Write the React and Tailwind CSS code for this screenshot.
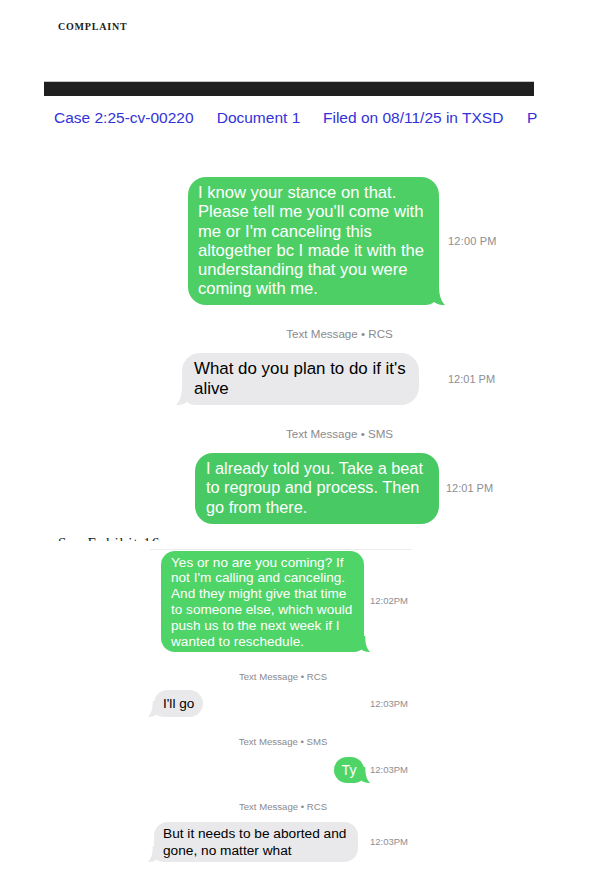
const SANS = { fontFamily: '"Liberation Sans", Arial, sans-serif' };
const SERIF = { fontFamily: '"Liberation Serif", "Times New Roman", serif' };

function Tail({ side, color, w = 24, h = 20 }) {
  // iMessage-style curl in the bottom corner of a bubble
  const pos = side === 'right' ? 'right-[-6px]' : 'left-[-6px] -scale-x-100';
  return (
    <svg width={w} height={h} viewBox="0 0 24 20" className={`absolute bottom-0 ${pos}`}>
      <path d="M0 0 H18 C18 8 19 15 24 20 C19.5 20.3 15.5 19 13 17 C11 19 8 20 4 20 H0 Z" fill={color} />
    </svg>
  );
}

function Lines({ lines }) {
  return lines.map((l, i) => (
    <span key={i} className="relative block whitespace-nowrap">{l}</span>
  ));
}

export default function App() {
  return (
    <div className="relative w-[607px] h-[869px] overflow-hidden bg-white" style={SANS}>
      {/* page header */}
      <div className="pt-[21px] pl-[58px] text-[10px] leading-[12px] font-semibold tracking-[0.8px] text-[#222]" style={SERIF}>
        COMPLAINT
      </div>
      <div className="mt-[48px] ml-[44px] w-[490px] h-[15px] bg-[#1f1f1f] border-t border-[#c4c4c4]" />
      <div className="mt-[13px] ml-[54px] flex text-[15.5px] leading-[18px] text-[#3232d8] whitespace-nowrap">
        <span className="w-[162.7px]">Case 2:25-cv-00220</span>
        <span className="w-[106.3px]">Document 1</span>
        <span className="w-[204px]">Filed on 08/11/25 in TXSD</span>
        <span>P</span>
      </div>

      {/* first screenshot */}
      <div className="mt-[50px] ml-[182px] w-[315px]">
        <div className="flex items-center">
          <div className="w-[257px] flex justify-end">
            <div className="relative w-[251px] rounded-[18px] bg-[#4dcf66] pl-[10px] pt-[6px] pb-[6px] text-[16.6px] leading-[19.3px] text-white">
              <Tail side="right" color="#4dcf66" />
              <Lines lines={[
                'I know your stance on that.',
                "Please tell me you'll come with",
                "me or I'm canceling this",
                'altogether bc I made it with the',
                'understanding that you were',
                'coming with me.',
              ]} />
            </div>
          </div>
          <span className="ml-[9px] text-[11px] text-[#8e8e93] tracking-[0.2px]">12:00 PM</span>
        </div>

        <div className="mt-[23px] text-center text-[11.6px] leading-[12px] text-[#8a8a8e]">Text Message • RCS</div>

        <div className="mt-[13px] flex items-center">
          <div className="w-[257px] flex justify-start">
            <div className="relative w-[237px] rounded-[18px] bg-[#e9e9eb] pl-[12px] py-[6px] text-[16.9px] leading-[20px] text-black">
              <Tail side="left" color="#e9e9eb" />
              <Lines lines={["What do you plan to do if it's", 'alive']} />
            </div>
          </div>
          <span className="ml-[9px] text-[11px] text-[#8e8e93]">12:01 PM</span>
        </div>

        <div className="mt-[23px] text-center text-[11.6px] leading-[12px] text-[#8a8a8e]">Text Message • SMS</div>

        <div className="mt-[13px] flex items-center">
          <div className="w-[257px] flex justify-end">
            <div className="w-[244px] rounded-[18px] bg-[#48c964] pl-[11px] py-[6px] text-[16.3px] leading-[19.6px] text-white">
              <Lines lines={[
                'I already told you. Take a beat',
                'to regroup and process. Then',
                'go from there.',
              ]} />
            </div>
          </div>
          <span className="ml-[7px] text-[11px] text-[#8e8e93]">12:01 PM</span>
        </div>
      </div>

      {/* caption cut off by the next screenshot */}
      <div className="mt-[12px] ml-[58px] h-[5px] overflow-hidden text-[15px] leading-[15px] tracking-[1px] text-[#222]" style={SERIF}>
        See Exhibit 16
      </div>

      {/* second screenshot */}
      <div className="mt-[8px] ml-[150px] w-[262px] border-t border-[#ededed] pl-[4px]">
        <div className="mt-[1px] flex items-center">
          <div className="w-[210px] flex justify-end">
            <div className="relative w-[203px] rounded-[14px] bg-[#4fd468] pl-[10px] pt-[4px] pb-[3px] text-[13.6px] leading-[15.8px] text-white">
              <Tail side="right" color="#4fd468" w={19} h={16} />
              <Lines lines={[
                'Yes or no are you coming? If',
                "not I'm calling and canceling.",
                'And they might give that time',
                'to someone else, which would',
                'push us to the next week if I',
                'wanted to reschedule.',
              ]} />
            </div>
          </div>
          <span className="ml-[6px] text-[9.5px] text-[#8e8e93]">12:02PM</span>
        </div>

        <div className="mt-[18.5px] text-center text-[9.6px] leading-[11px] text-[#8a8a8e]">Text Message • RCS</div>

        <div className="mt-[8.5px] flex items-center">
          <div className="w-[210px] flex justify-start">
            <div className="relative rounded-[14px] bg-[#e9e9eb] px-[9px] py-[5.5px] text-[13.6px] leading-[16px] text-black">
              <Tail side="left" color="#e9e9eb" w={19} h={16} />
              <Lines lines={["I'll go"]} />
            </div>
          </div>
          <span className="ml-[6px] text-[9.5px] text-[#8e8e93]">12:03PM</span>
        </div>

        <div className="mt-[18.5px] text-center text-[9.6px] leading-[11px] text-[#8a8a8e]">Text Message • SMS</div>

        <div className="mt-[10.5px] flex items-center">
          <div className="w-[210px] flex justify-end">
            <div className="relative w-[30px] rounded-[14px] bg-[#4fd468] py-[5px] text-center text-[14px] leading-[16px] text-white">
              <Tail side="right" color="#4fd468" w={19} h={16} />
              <Lines lines={['Ty']} />
            </div>
          </div>
          <span className="ml-[6px] text-[9.5px] text-[#8e8e93]">12:03PM</span>
        </div>

        <div className="mt-[17.5px] text-center text-[9.6px] leading-[11px] text-[#8a8a8e]">Text Message • RCS</div>

        <div className="mt-[10.5px] flex items-center">
          <div className="w-[210px] flex justify-start">
            <div className="relative w-[204px] rounded-[14px] bg-[#e9e9eb] pl-[9px] py-[3px] text-[13.7px] leading-[17px] text-black">
              <Tail side="left" color="#e9e9eb" w={19} h={16} />
              <Lines lines={['But it needs to be aborted and', 'gone, no matter what']} />
            </div>
          </div>
          <span className="ml-[6px] text-[9.5px] text-[#8e8e93]">12:03PM</span>
        </div>
      </div>
    </div>
  );
}
